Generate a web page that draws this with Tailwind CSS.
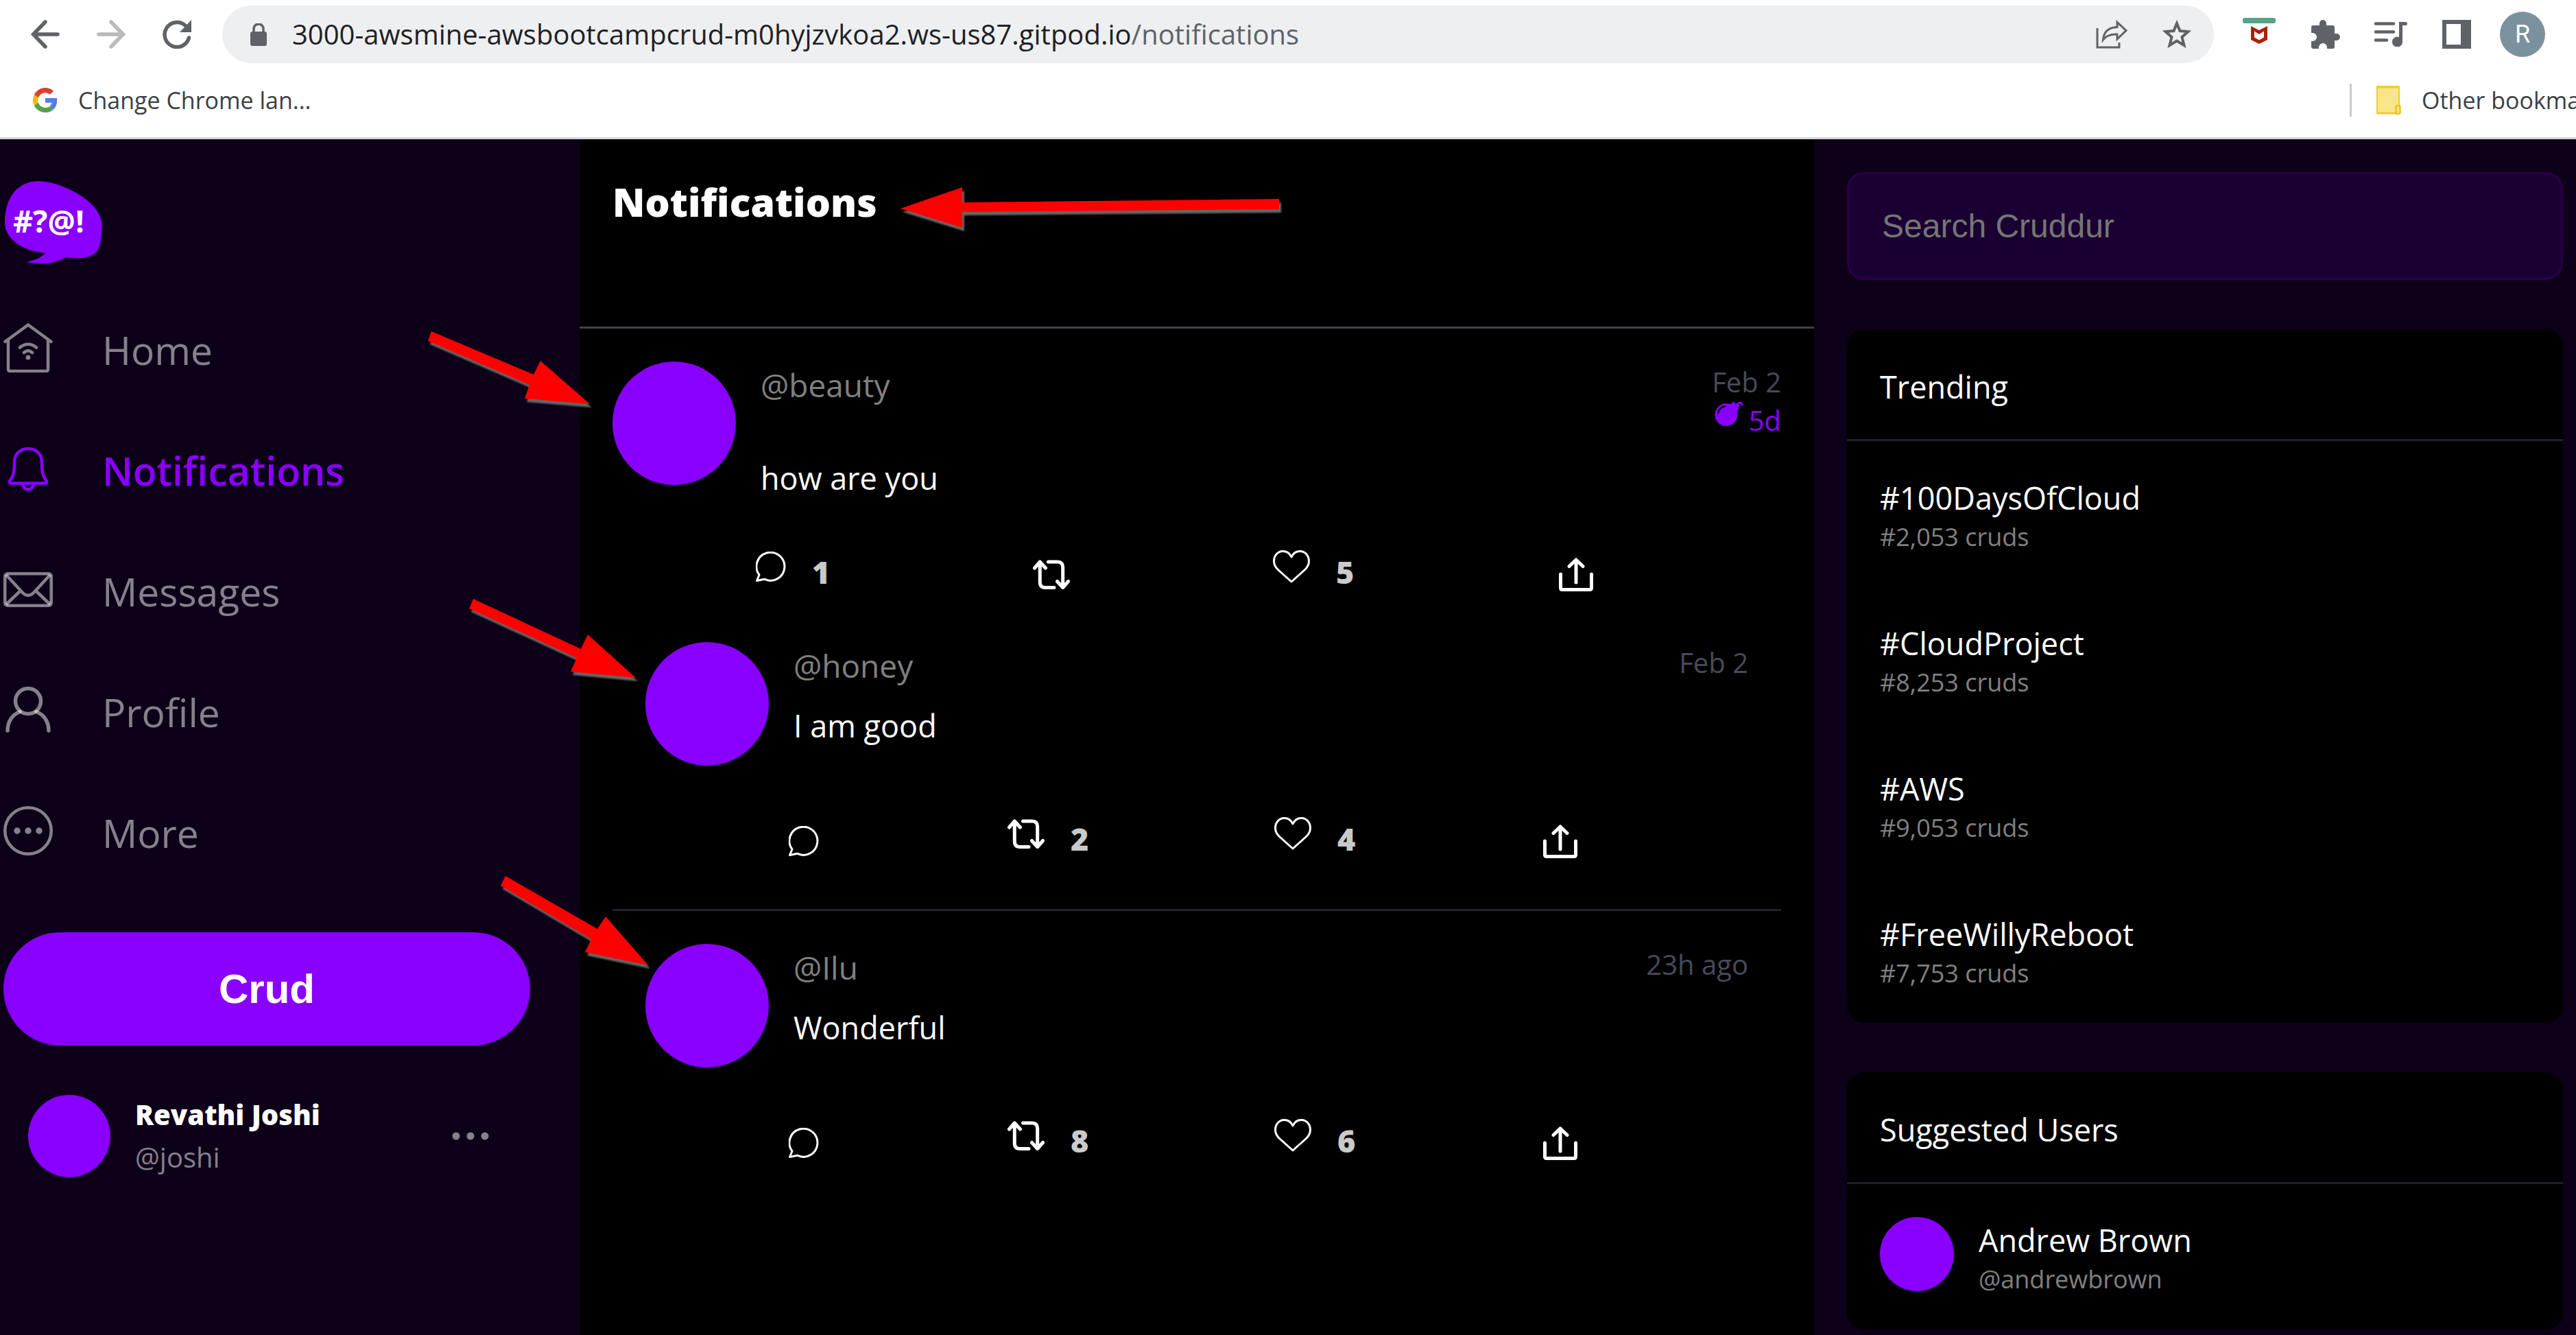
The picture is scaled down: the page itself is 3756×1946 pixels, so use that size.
<!DOCTYPE html>
<html lang="en">
<head>
<meta charset="utf-8">
<meta name="viewport" content="width=device-width, initial-scale=1">
<title>Cruddur - Notifications</title>
<script src="https://cdn.jsdelivr.net/npm/@tailwindcss/browser@4"></script>
</head>
<body class="relative flex min-h-screen flex-col overflow-x-hidden bg-[#0d0019] font-['Open_Sans','Noto_Sans',sans-serif] text-[45px] text-white">

<!-- Shared icon shapes -->
<svg class="hidden" aria-hidden="true">
  <symbol id="reply" viewBox="0 0 44 44"><path d="M1.5 42.5 L5 34 A20.5 20.5 0 1 1 12.5 40.2 Z" fill="none" stroke="currentColor" stroke-width="3" stroke-linejoin="round"/></symbol>
  <symbol id="repost" viewBox="0 0 54 43"><path d="M2.5 12 L10.3 3 L18.5 12 M10.3 4 V32 Q10.3 40.5 18 40.5 H31 M22.5 3 H36 Q43.7 3 43.7 11 V39 M35.5 31.5 L43.7 40.5 L51.5 31.5" fill="none" stroke="currentColor" stroke-width="5" stroke-linecap="round" stroke-linejoin="round"/></symbol>
  <symbol id="heart" viewBox="0 0 54 48"><path d="M27 46 L8 29 C3.500 25 1.500 21.500 1.500 16 C1.500 8 7 1.500 14.500 1.500 C20 1.500 24.500 4.500 27 10 C29.500 4.500 34 1.500 39.500 1.500 C47 1.500 52.500 8 52.500 16 C52.500 21.500 50.500 25 46 29 Z" fill="none" stroke="currentColor" stroke-width="3" stroke-linejoin="round"/></symbol>
  <symbol id="share" viewBox="0 0 50 49"><path d="M2.500 24 V44 Q2.500 46.500 5 46.500 H45 Q47.500 46.500 47.500 44 V24 M25 36 V3 M15 12.500 L25 3 L35 12.500" fill="none" stroke="currentColor" stroke-width="5" stroke-linecap="round" stroke-linejoin="round"/></symbol>
</svg>

<!-- Browser toolbar -->
<header class="h-[203px] border-b-[3px] border-[#d6d6de] bg-white font-['Open_Sans',sans-serif] text-[#5f6368]">
  <div class="flex h-[100px] items-center pl-[45px] pr-[45px]">
    <button aria-label="Back" class="mr-[54px]"><svg class="h-[42px] w-[42px]" viewBox="0 0 42 42" fill="none" stroke="currentColor" stroke-width="5.500" stroke-linecap="round"><path d="M39 21 H5 M21 3 L3.500 21 L21 39"/></svg></button>
    <button aria-label="Forward" class="mr-[54px] text-[#bababd]"><svg class="h-[42px] w-[42px]" viewBox="0 0 42 42" fill="none" stroke="currentColor" stroke-width="5.500" stroke-linecap="round"><path d="M3 21 H37 M21 3 L38.500 21 L21 39"/></svg></button>
    <button aria-label="Reload" class="mr-[45px]"><svg class="h-[42px] w-[42px]" viewBox="0 0 42 42"><path d="M38.500 26 A18 18 0 1 1 33 8" fill="none" stroke="currentColor" stroke-width="5.500" stroke-linecap="round"/><path d="M42 0 V18 H25 Z" fill="currentColor"/></svg></button>
    <div class="flex h-[84px] flex-1 items-center rounded-full bg-[#eeeff1] pl-[41px] pr-[32px]">
      <svg class="mr-[37px] h-[33px] w-[24px]" viewBox="0 0 24 33"><rect y="12" width="24" height="21" rx="3" fill="currentColor"/><path d="M5 14 V8 A7 7 0 0 1 19 8 V14" fill="none" stroke="currentColor" stroke-width="3.500"/></svg>
      <span class="flex-1 whitespace-nowrap text-[40px]"><span class="text-[#202124]">3000-awsmine-awsbootcampcrud-m0hyjzvkoa2.ws-us87.gitpod.io</span>/notifications</span>
      <button aria-label="Share page" class="mr-[50px]"><svg class="h-[42px] w-[46px]" viewBox="0 0 46 42" fill="none" stroke="currentColor" stroke-width="3"><path d="M2 12 V40 H34 V33 M10.500 29 C11.500 17 18 11 31 10.500 V3.500 L44 15.500 L31 28 V21 C21 20.500 15 23 10.500 29 Z"/></svg></button>
      <button aria-label="Bookmark this page"><svg class="h-[42px] w-[44px]" viewBox="0 0 44 42" fill="none" stroke="currentColor" stroke-width="4"><path d="M22 5 L26.500 16 L38.500 17 L29.500 25 L32.500 37 L22 30.500 L11.500 37 L14.500 25 L5.500 17 L17.500 16 Z"/></svg></button>
    </div>
    <button aria-label="McAfee" class="ml-[42px] mr-[52px]"><svg class="h-[48px] w-[48px]" viewBox="0 0 48 48"><rect width="48" height="8" rx="3" fill="#58a287"/><path d="M12 12 L24 18 L36 12 V32 L24 38 L12 32 Z M17 19.500 V28.500 L24 32.500 L31 28.500 V19.500 L24 24 Z" fill="#b01e0b" fill-rule="evenodd"/></svg></button>
    <button aria-label="Extensions" class="mr-[50px]"><svg class="h-[42px] w-[42px]" viewBox="0 0 42 42"><path d="M3 8 H12 V5 A5 5 0 0 1 22 5 V8 H31 Q34 8 34 11 V20 H37 A5 5 0 0 1 37 30 H34 V39 Q34 42 31 42 H23 V40 A6 6 0 0 0 11 40 V42 H3 Q0 42 0 39 V31 H2 A6 6 0 0 0 2 19 H0 V11 Q0 8 3 8 Z" fill="currentColor"/></svg></button>
    <button aria-label="Media controls" class="mr-[51px]"><svg class="h-[36px] w-[48px]" viewBox="0 0 48 36"><path d="M2 2.500 H28 M2 14.500 H28 M2 26.500 H18" stroke="currentColor" stroke-width="4.500" stroke-linecap="round"/><path d="M36 0 H46 Q48 0 48 2.500 T46 5 H41 V28.500 A7.500 7.500 0 1 1 36 22 Z" fill="currentColor"/></svg></button>
    <button aria-label="Side panel" class="mr-[42px]"><svg class="h-[42px] w-[42px]" viewBox="0 0 42 42"><path d="M0 0 H42 V42 H0 Z M6 6 V36 H27 V6 Z" fill="currentColor" fill-rule="evenodd"/></svg></button>
    <button aria-label="Profile R" class="flex h-[66px] w-[66px] items-center justify-center rounded-full bg-[#7b919e] font-[Roboto,sans-serif] text-[36px] text-white">R</button>
  </div>
  <div class="flex h-[92px] items-center overflow-hidden whitespace-nowrap pl-[48px] text-[34px] text-[#3c4043]">
    <svg class="mr-[30px] h-[36px] w-[36px]" viewBox="0 0 48 48"><path fill="#d8432b" d="M24 9.500c3.500 0 6.700 1.200 9.200 3.600l6.900-6.900C35.900 2.400 30.500 0 24 0 14.600 0 6.500 5.400 2.600 13.200l8 6.200C12.400 13.700 17.700 9.500 24 9.500z"/><path fill="#4f7ff0" d="M47 24.600c0-1.600-.2-3.100-.4-4.600H24v9h12.900c-.6 3-2.300 5.500-4.800 7.200l7.700 6C44.400 38 47 31.900 47 24.600z"/><path fill="#f1ba06" d="M10.500 28.600A14.500 14.500 0 0 1 10.500 19.400l-8-6.200a24 24 0 0 0 0 21.600z"/><path fill="#55a24c" d="M24 48c6.500 0 11.900-2.100 15.900-5.800l-7.700-6c-2.200 1.500-4.900 2.300-8.200 2.300-6.300 0-11.600-4.200-13.500-9.900l-8 6.200C6.500 42.600 14.600 48 24 48z"/></svg>
    <a href="#" class="flex-1">Change Chrome lan...</a>
    <div class="flex w-[330px] shrink-0 items-center">
      <span class="mr-[36px] h-[48px] w-[3px] shrink-0 bg-[#cacace]"></span>
      <svg class="mr-[30px] h-[42px] w-[36px] shrink-0" viewBox="0 0 36 42"><path d="M1 1 H33 V40 H1 Z" fill="#f9e58a" stroke="#ecce2e" stroke-width="2"/><path d="M1 2 H33 M1 40 H35" stroke="#ecce2e" stroke-width="3"/><rect x="28.500" y="29" width="6" height="12" rx="2" fill="#f9e58a" stroke="#e6c51f" stroke-width="2.500"/></svg>
      <a href="#">Other bookmarks</a>
    </div>
  </div>
</header>

<div class="grid flex-1 grid-cols-[845fr_1800fr_1111fr]">

  <!-- Left navigation -->
  <nav class="pl-[5px]">
    <div class="h-[220px] pt-[60px]">
      <svg class="h-[122px] w-[146px]" viewBox="0 0 146 122" role="img" aria-label="Cruddur">
        <path d="M2 59 C3 25 20 1 52 1 C85 2 143 30 144 65 C142 95 140 106 125 111 C115 114 105 114 91 112 C75 122 55 123 33 119 C45 117 54 113 61 106 C25 102 1 84 2 59 Z" fill="#8900ff"/>
        <text x="14" y="76" fill="#fff" font-size="45" font-weight="700" font-family="Open Sans">#?@!</text>
      </svg>
    </div>
    <a href="#" class="flex h-44 items-center gap-[72px] text-[57px] text-white/50">
      <svg class="mb-2 h-[72px] w-[72px]" viewBox="0 0 72 72" fill="none" stroke="currentColor" stroke-width="4.500" stroke-linecap="round" stroke-linejoin="round"><path d="M2.500 27 L36 2.500 L69.500 27 M7 25 V67 Q7 70 10 70 H62 Q65 70 65 67 V25"/><path d="M24 35.500 Q36 26 48 35.500 M30 43 Q36 37.500 42 43"/><circle cx="36" cy="50" r="3.500" fill="currentColor" stroke="none"/></svg>Home</a>
    <a href="#" class="flex h-44 items-center gap-[72px] text-[57px] font-semibold text-[#8900ff]">
      <svg class="mb-2 h-[72px] w-[72px]" viewBox="0 0 72 72" fill="none" stroke="currentColor" stroke-width="4.500" stroke-linejoin="round"><path d="M16 27 C16 15 24 7 36 7 C48 7 56 15 56 27 C56 44 58 47 62 53 C64 56 63 57.500 60 57.500 H12 C9 57.500 8 56 10 53 C14 47 16 44 16 27 Z M28 58 A8 8.500 0 0 0 44 58"/></svg>Notifications</a>
    <a href="#" class="flex h-44 items-center gap-[72px] text-[57px] text-white/50">
      <svg class="mb-2 h-[72px] w-[72px]" viewBox="0 0 72 72" fill="none" stroke="currentColor" stroke-width="4.500"><rect x="2.250" y="13.250" width="67.500" height="46.500" rx="4"/><path d="M4 15 L28 41 Q36 49 44 41 L68 15 M4 58 L25 38 M68 58 L47 38"/></svg>Messages</a>
    <a href="#" class="flex h-44 items-center gap-[72px] text-[57px] text-white/50">
      <svg class="mb-2 h-[72px] w-[72px]" viewBox="0 0 72 72" fill="none" stroke="currentColor" stroke-width="5.500" stroke-linecap="round"><circle cx="36" cy="23" r="18.500"/><path d="M6 66 C6 54 12 43 24 38.500 M66 66 C66 54 60 43 48 38.500"/></svg>Profile</a>
    <a href="#" class="flex h-44 items-center gap-[72px] text-[57px] text-white/50">
      <svg class="mb-2 h-[72px] w-[72px]" viewBox="0 0 72 72" fill="currentColor"><circle cx="36" cy="36" r="33.750" fill="none" stroke="currentColor" stroke-width="4.500"/><circle cx="20" cy="36" r="4.700"/><circle cx="36" cy="36" r="4.700"/><circle cx="52" cy="36" r="4.700"/></svg>More</a>
    <div class="pr-[72px] pt-14">
      <button class="h-[165px] w-full rounded-full bg-[#8900ff] font-['Liberation_Sans',sans-serif] text-[60px] font-bold">Crud</button>
    </div>
    <div class="mt-[70px] flex items-center pl-9 pr-[132px] text-[40px] leading-[62px]">
      <span class="h-[120px] w-[120px] rounded-full bg-[#8900ff]"></span>
      <div class="ml-9 flex-1">
        <p class="font-extrabold">Revathi Joshi</p>
        <p class="text-white/50">@joshi</p>
      </div>
      <button aria-label="Account menu" class="text-white/50"><svg class="h-[12px] w-[54px]" viewBox="0 0 54 12" fill="currentColor"><circle cx="6" cy="6" r="5.500"/><circle cx="27" cy="6" r="5.500"/><circle cx="48" cy="6" r="5.500"/></svg></button>
    </div>
  </nav>

  <!-- Notification feed -->
  <main class="bg-black">
    <div class="h-[276px] border-b-[3px] border-[#41414f] px-12 pt-[51px]">
      <h1 class="text-[57px] font-extrabold leading-[80px]">Notifications</h1>
    </div>

    <div class="px-12 pt-12">
      <article>
        <div class="flex items-start">
          <span class="mr-9 h-[180px] w-[180px] shrink-0 rounded-full bg-[#8900ff]"></span>
          <div class="flex-1 pt-1 leading-[60px]">
            <p class="text-[46px] text-[#808080]">@beauty</p>
            <p class="mt-[76px]">how are you</p>
          </div>
          <div class="pt-0.5 text-right text-[40px] leading-[56px]">
            <p class="text-[#474a5a]">Feb 2</p>
            <p class="flex justify-end gap-2 text-[#8900ff]"><svg class="h-[36px] w-[42px]" viewBox="0 0 42 36"><circle cx="17" cy="19.500" r="16.500" fill="currentColor"/><path d="M23 4 L28 0 L31 4 L36 5 L35 12 L31 15 Z" fill="currentColor"/><path d="M32 5 Q38 -1 41 6" fill="none" stroke="currentColor" stroke-width="3"/><path d="M5 17 Q6.500 9 15 7" fill="none" stroke="#000" stroke-width="2.500" stroke-linecap="round"/></svg>5d</p>
          </div>
        </div>
        <div class="mt-[67px] grid h-[88px] grid-cols-[404fr_350fr_417fr_324fr] items-start pl-[209px] font-extrabold leading-[80px] text-[#cacaca]">
          <button class="flex gap-[38px]"><span class="flex h-16 items-center text-white"><svg class="h-[44px] w-[44px]"><use href="#reply"/></svg></span>1</button>
          <button class="flex h-[86px] items-center text-white" aria-label="Repost"><svg class="h-[43px] w-[54px]"><use href="#repost"/></svg></button>
          <button class="flex gap-[38px]"><span class="flex h-16 items-center text-white"><svg class="h-[48px] w-[54px]"><use href="#heart"/></svg></span>5</button>
          <button class="flex h-[86px] items-center text-white" aria-label="Share"><svg class="h-[49px] w-[50px]"><use href="#share"/></svg></button>
        </div>
      </article>

      <article class="border-b-[3px] border-[#22222e] px-12 py-[54px]">
        <div class="flex items-start">
          <span class="mr-9 h-[180px] w-[180px] shrink-0 rounded-full bg-[#8900ff]"></span>
          <div class="flex-1 pt-1 leading-[60px]">
            <p class="text-[46px] text-[#808080]">@honey</p>
            <p class="mt-7">I am good</p>
          </div>
          <p class="pt-0.5 text-[40px] leading-[56px] text-[#474a5a]">Feb 2</p>
        </div>
        <div class="mt-[67px] grid h-[88px] grid-cols-[319fr_389fr_392fr_299fr] items-start pl-[209px] font-extrabold leading-[80px] text-[#cacaca]">
          <button class="flex h-[86px] items-center text-white" aria-label="Reply"><svg class="h-[44px] w-[44px]"><use href="#reply"/></svg></button>
          <button class="flex gap-[38px]"><span class="flex h-16 items-center text-white"><svg class="h-[43px] w-[54px]"><use href="#repost"/></svg></span>2</button>
          <button class="flex gap-[38px]"><span class="flex h-16 items-center text-white"><svg class="h-[48px] w-[54px]"><use href="#heart"/></svg></span>4</button>
          <button class="flex h-[86px] items-center text-white" aria-label="Share"><svg class="h-[49px] w-[50px]"><use href="#share"/></svg></button>
        </div>
      </article>

      <article class="px-12 pb-[54px] pt-12">
        <div class="flex items-start">
          <span class="mr-9 h-[180px] w-[180px] shrink-0 rounded-full bg-[#8900ff]"></span>
          <div class="flex-1 pt-1 leading-[60px]">
            <p class="text-[46px] text-[#808080]">@Ilu</p>
            <p class="mt-7">Wonderful</p>
          </div>
          <p class="pt-0.5 text-[40px] leading-[56px] text-[#474a5a]">23h ago</p>
        </div>
        <div class="mt-[67px] grid h-[88px] grid-cols-[319fr_389fr_392fr_299fr] items-start pl-[209px] font-extrabold leading-[80px] text-[#cacaca]">
          <button class="flex h-[86px] items-center text-white" aria-label="Reply"><svg class="h-[44px] w-[44px]"><use href="#reply"/></svg></button>
          <button class="flex gap-[38px]"><span class="flex h-16 items-center text-white"><svg class="h-[43px] w-[54px]"><use href="#repost"/></svg></span>8</button>
          <button class="flex gap-[38px]"><span class="flex h-16 items-center text-white"><svg class="h-[48px] w-[54px]"><use href="#heart"/></svg></span>6</button>
          <button class="flex h-[86px] items-center text-white" aria-label="Share"><svg class="h-[49px] w-[50px]"><use href="#share"/></svg></button>
        </div>
      </article>
    </div>
  </main>

  <!-- Search, trending and suggestions -->
  <aside class="pl-12 pr-[19px] pt-12">
    <input type="search" aria-label="Search Cruddur" placeholder="Search Cruddur" class="block h-[157px] w-full rounded-3xl border-[3px] border-[#27004a] bg-[#1a0032] px-12 font-['Liberation_Sans',sans-serif] text-[48px] placeholder:text-[#757575]">

    <section class="mt-[72px] rounded-3xl bg-black">
      <h2 class="h-[163px] border-b-[3px] border-[#1f1f2b] px-12 pt-[54px] leading-[60px]">Trending</h2>
      <a href="#" class="block h-[212px] px-12 pt-[53px] leading-[60px]">#100DaysOfCloud<span class="block text-[36px] leading-[54px] text-[#808080]">#2,053 cruds</span></a>
      <a href="#" class="block h-[212px] px-12 pt-[53px] leading-[60px]">#CloudProject<span class="block text-[36px] leading-[54px] text-[#808080]">#8,253 cruds</span></a>
      <a href="#" class="block h-[212px] px-12 pt-[53px] leading-[60px]">#AWS<span class="block text-[36px] leading-[54px] text-[#808080]">#9,053 cruds</span></a>
      <a href="#" class="block h-[212px] px-12 pt-[53px] leading-[60px]">#FreeWillyReboot<span class="block text-[36px] leading-[54px] text-[#808080]">#7,753 cruds</span></a>
    </section>

    <section class="mt-[72px] rounded-3xl bg-black">
      <h2 class="h-[163px] border-b-[3px] border-[#1f1f2b] px-12 pt-[54px] leading-[60px]">Suggested Users</h2>
      <a href="#" class="flex h-[212px] items-start gap-9 px-12 pt-12">
        <span class="h-[108px] w-[108px] rounded-full bg-[#8900ff]"></span>
        <span class="block pt-1 leading-[60px]">Andrew Brown<span class="block text-[36px] leading-[54px] text-[#808080]">@andrewbrown</span></span>
      </a>
    </section>
  </aside>
</div>

<!-- Annotation arrows -->
<svg class="pointer-events-none absolute left-0 top-0 w-full drop-shadow-[3px_5px_1px_#666]" viewBox="0 0 3756 1946" fill="#f00" aria-hidden="true">
  <path d="M1313 304 L1403 273 V295 L1865 290 V305 L1403 309 V332 Z"/>
  <path d="M860 589 L788 526 L778 546 L629 483 L624 497 L772 561 L765 581 Z"/>
  <path d="M927 988 L857 925 L847 946 L690 873 L684 887 L841 959 L832 979 Z"/>
  <path d="M945 1407 L883 1336 L871 1354 L737 1277 L730 1291 L862 1369 L853 1388 Z"/>
</svg>
</body>
</html>
